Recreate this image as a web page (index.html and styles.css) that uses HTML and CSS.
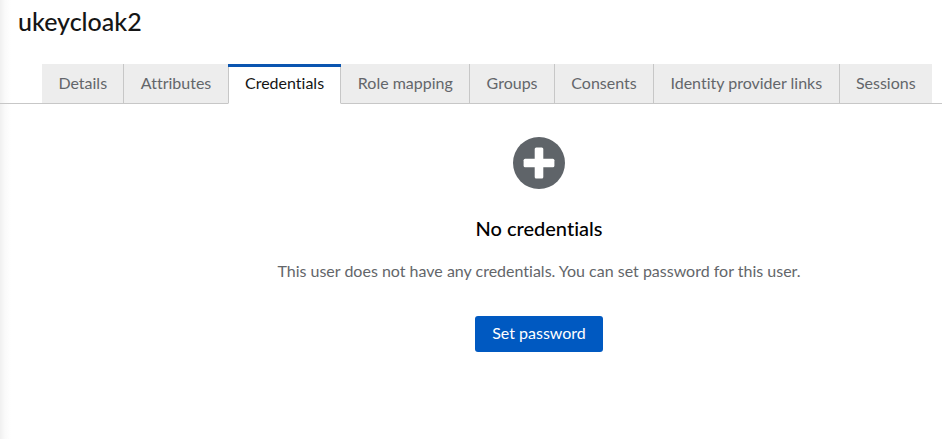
FILE: index.html
```html
<!DOCTYPE html>
<html lang="en">
<head>
  <meta charset="utf-8">
  <meta name="viewport" content="width=device-width, initial-scale=1">
  <title>ukeycloak2</title>
  <link rel="stylesheet" href="styles.css">
</head>
<body>
  <main class="page">
    <h1 class="page-title">ukeycloak2</h1>
    <div class="tabs" role="tablist">
      <button class="tab" type="button" role="tab" aria-selected="false">Details</button>
      <button class="tab" type="button" role="tab" aria-selected="false">Attributes</button>
      <button class="tab tab-current" type="button" role="tab" aria-selected="true">Credentials</button>
      <button class="tab" type="button" role="tab" aria-selected="false">Role mapping</button>
      <button class="tab" type="button" role="tab" aria-selected="false">Groups</button>
      <button class="tab" type="button" role="tab" aria-selected="false">Consents</button>
      <button class="tab" type="button" role="tab" aria-selected="false">Identity provider links</button>
      <button class="tab" type="button" role="tab" aria-selected="false">Sessions</button>
    </div>
    <section class="empty-state" role="tabpanel">
      <svg class="empty-icon" viewBox="0 0 52 52" aria-hidden="true">
        <circle cx="26" cy="26" r="26" fill="#5f6469"/>
        <rect x="21.700" y="10.600" width="8.600" height="30.800" rx="1.500" fill="#fff"/>
        <rect x="10.600" y="21.700" width="30.800" height="8.600" rx="1.500" fill="#fff"/>
      </svg>
      <h2 class="empty-title">No credentials</h2>
      <p class="empty-text">This user does not have any credentials. You can set password for this user.</p>
      <button class="primary-button" type="button">Set password</button>
    </section>
  </main>
</body>
</html>
```
FILE: styles.css
```css
* {
  box-sizing: border-box;
}

body {
  margin: 0;
  background: #fff;
  color: #151515;
  font: 16px/24px Lato, sans-serif;
  font-variant-ligatures: none;
}

button {
  border: 0;
  font: inherit;
  font-variant-ligatures: none;
  cursor: pointer;
}

.page {
  min-height: 100vh;
  background: linear-gradient(to right, #f0f0f0, #fafafa 5px, #fff 11px);
}

.page-title {
  margin: 0;
  padding: 5px 18px 27px;
  font-size: 25px;
  font-weight: 500;
  line-height: 32px;
}

.tabs {
  display: flex;
  padding: 0 10px 0 42px;
  background: linear-gradient(#c7c7c7, #c7c7c7) bottom / 100% 1px no-repeat;
}

.tab {
  position: relative;
  flex: 1 1 auto;
  height: 40px;
  padding: 0 0 2px;
  border-right: 1px solid #c7c7c7;
  border-bottom: 1px solid #c7c7c7;
  background: #ededed;
  color: #63666a;
  white-space: nowrap;
}

.tab:last-child {
  border-right: 0;
}

.tab-current {
  margin-left: -1px;
  border-left: 1px solid #c7c7c7;
  border-bottom-color: #fff;
  background: #fff;
  color: #151515;
}

.tab-current::before {
  position: absolute;
  top: 0;
  right: -1px;
  left: -1px;
  height: 3px;
  background: #0b55b0;
  content: "";
}

.empty-state {
  display: flex;
  flex-direction: column;
  align-items: center;
  padding: 33px 32px 32px 168px;
  text-align: center;
}

.empty-icon {
  width: 52px;
  height: 52px;
}

.empty-title {
  margin: 23px 0 0;
  color: #000;
  font-size: 20px;
  font-weight: 500;
  line-height: 32px;
}

.empty-text {
  margin: 15px 0 0;
  color: #63666a;
}

.primary-button {
  height: 36px;
  margin-top: 33px;
  padding: 0 17px 2px;
  border-radius: 3px;
  background: #0059c1;
  color: #fff;
}
```
